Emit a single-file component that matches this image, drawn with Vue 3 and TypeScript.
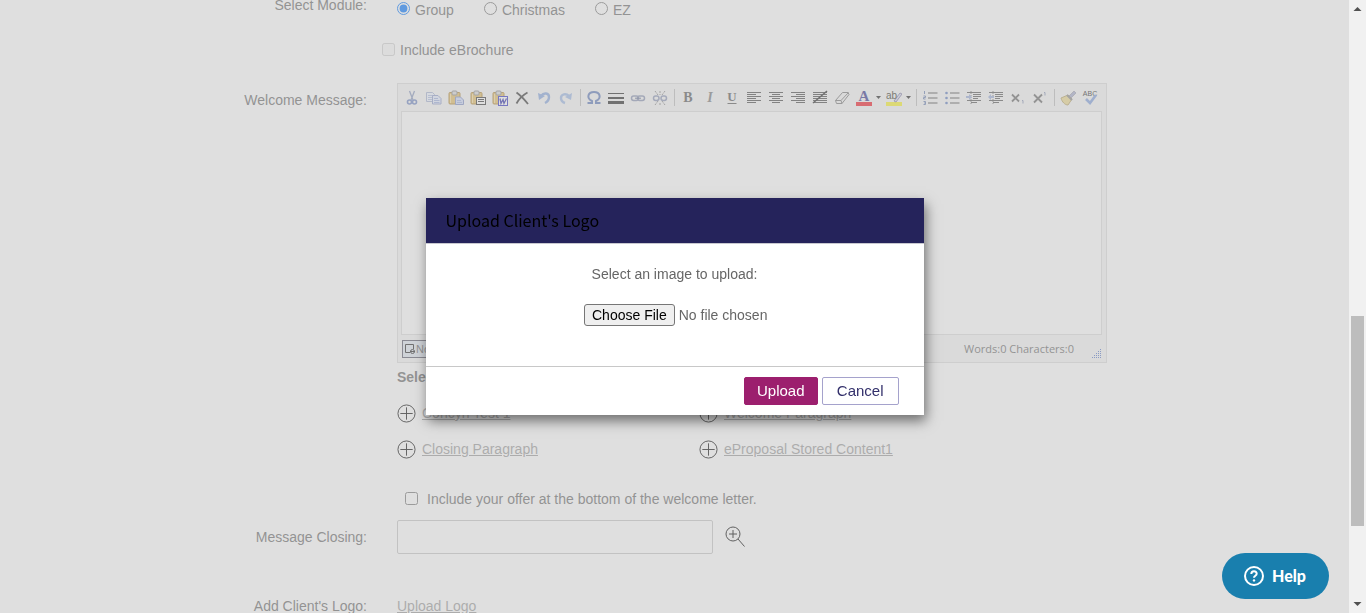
<script setup lang="ts">
import { ref } from 'vue'

interface Tool {
  name: string
  art: string
  menu?: boolean
}

const clipboard =
  '<rect x="1" y="2.500" width="11" height="11.500" rx="1" fill="#e3bd62" stroke="#ad8434"/><rect x="4" y="1" width="5" height="4" rx="1" fill="#d8d8d8" stroke="#888"/><path d="M2.500 4v9" stroke="#f6dea0"/>'

const groups: Tool[][] = [
  [
    {
      name: 'Cut',
      art: '<path d="M5.500 1L9 10M10.500 1L7 10" stroke="#8796bd" stroke-width="1.300"/><circle cx="5.500" cy="12" r="2" fill="none" stroke="#6d85c2" stroke-width="1.600"/><circle cx="10.500" cy="12" r="2" fill="none" stroke="#6d85c2" stroke-width="1.600"/>'
    },
    {
      name: 'Copy',
      art: '<path d="M.5 2.500h6l2 2v7h-8z" fill="#edf2ff" stroke="#a4b0d0"/><path d="M2 5.500h5M2 7.500h5M2 9.500h5" stroke="#aebce0"/><path d="M6.500 5.500h5.500l3 3v5.500H6.500z" fill="#e2eaff" stroke="#8f9dca"/><path d="M8 8.500h4M8 10.500h5.500M8 12.500h5.500" stroke="#9cafdf"/>'
    },
    {
      name: 'Paste',
      art: clipboard + '<path d="M7.500 7h5l3 3v4.500h-8z" fill="#cdd9f8" stroke="#7f8fc4"/><path d="M9 10.500h4M9 12.500h5" stroke="#9cafdf"/>'
    },
    {
      name: 'Paste Plain Text',
      art: clipboard + '<rect x="6.500" y="7.500" width="9" height="7" fill="#fff" stroke="#333"/><path d="M8 9.500h6M8 11.500h6" stroke="#333"/>'
    },
    {
      name: 'Paste From Word',
      art: clipboard + '<rect x="6.500" y="6.500" width="9" height="9" fill="#fff" stroke="#2f2fc2"/><path d="M8 8.500l1 5 2-4 1 4 2.500-5" fill="none" stroke="#2929a8" stroke-width="1.300"/>'
    },
    { name: 'Delete', art: '<path d="M2.500 2.500C6 5 10 9 14 14M13.500 2.500C9 5 5 9 2.500 13.500" fill="none" stroke="#333" stroke-width="1.800"/>' },
    {
      name: 'Undo',
      art: '<path d="M5 6c3-4 8-3 8 1 0 3-2 5-4 6" fill="none" stroke="#85a4dc" stroke-width="2.400"/><path d="M2 3l1 7 6-4z" fill="#85a4dc"/>'
    },
    {
      name: 'Redo',
      art: '<path d="M11 6C8 3 3 4 3 8c0 2 1 4 4 5" fill="none" stroke="#9bb6e4" stroke-width="2.400"/><path d="M14 3l-1 7-6-3z" fill="#9bb6e4"/>'
    }
  ],
  [
    {
      name: 'Insert Symbol',
      art: '<path d="M1.500 13h4.500v-2C0 8 2 2 8 2s8 6 2 9v2h4.500" fill="none" stroke="#5d78b8" stroke-width="2"/>'
    },
    { name: 'Horizontal Rule', art: '<path d="M0 3.500h16" stroke="#222" stroke-width="1"/><path d="M0 8h16" stroke="#222" stroke-width="2"/><path d="M0 12.500h16" stroke="#222" stroke-width="3"/>' },
    {
      name: 'Insert Link',
      art: '<rect x="1.500" y="6" width="7" height="4.500" rx="2.200" fill="none" stroke="#8791b0" stroke-width="1.500"/><rect x="7.500" y="6" width="7" height="4.500" rx="2.200" fill="none" stroke="#8791b0" stroke-width="1.500"/><path d="M5 8.200h6" stroke="#5e6b90"/>'
    },
    {
      name: 'Remove Link',
      art: '<rect x="1.500" y="6" width="5.500" height="4.500" rx="2.200" fill="none" stroke="#8a94b5" stroke-width="1.500"/><rect x="9" y="6" width="5.500" height="4.500" rx="2.200" fill="none" stroke="#8a94b5" stroke-width="1.500"/><path d="M3 1l3 4M8 1v4M13 1l-3 4M3 15l3-4M8 15v-3M13 15l-3-4" stroke="#888" stroke-dasharray="2 1"/>'
    }
  ],
  [
    { name: 'Bold', art: '<text x="8" y="12" text-anchor="middle" font-family="Liberation Serif, serif" font-weight="700" font-size="14" fill="#555">B</text>' },
    { name: 'Italic', art: '<text x="8" y="12" text-anchor="middle" font-family="Liberation Serif, serif" font-style="italic" font-weight="700" font-size="14" fill="#777">I</text>' },
    { name: 'Underline', art: '<text x="8" y="11" text-anchor="middle" font-family="Liberation Serif, serif" font-weight="700" font-size="13" fill="#555">U</text><path d="M3.500 13.500h9" stroke="#555"/>' },
    { name: 'Align Left', art: '<path d="M1 2.500h14M1 4.500h9M1 6.500h14M1 8.500h9M1 10.500h14M1 12.500h9" stroke="#444"/>' },
    { name: 'Align Center', art: '<path d="M1 2.500h14M4 4.500h8M1 6.500h14M4 8.500h8M1 10.500h14M4 12.500h8" stroke="#444"/>' },
    { name: 'Align Right', art: '<path d="M1 2.500h14M6 4.500h9M1 6.500h14M6 8.500h9M1 10.500h14M6 12.500h9" stroke="#444"/>' },
    { name: 'Remove Alignment', art: '<path d="M1 2.500h14M1 4.500h14M1 6.500h14M1 8.500h14M1 10.500h14M1 12.500h14" stroke="#444"/><path d="M1 13L15 1" stroke="#222" stroke-width="1.500"/>' },
    {
      name: 'Format Stripper',
      art: '<path d="M1.500 10.500L8.500 2.500h5.500l1 2-7 9H2.500z" fill="#f3f3f3" stroke="#777"/><path d="M1.500 10.500h5.500l7.500-8M7 10.500l1 3" fill="none" stroke="#777"/>'
    },
    {
      name: 'Foreground Color',
      menu: true,
      art: '<text x="8" y="11" text-anchor="middle" font-family="Liberation Serif, serif" font-weight="700" font-size="15" fill="#33338c">A</text><path d="M0 14h16" stroke="#f01824" stroke-width="4"/>'
    },
    {
      name: 'Background Color',
      menu: true,
      art: '<path d="M0 14h16" stroke="#f8f32b" stroke-width="4"/><path d="M8 11l6-8 2 1-6 8z" fill="#d7d9ee" stroke="#8581a9"/><text x="0" y="9" font-family="Liberation Sans, Arial, sans-serif" font-size="10" fill="#33331c">ab</text>'
    }
  ],
  [
    {
      name: 'Numbered List',
      art: '<path d="M6 3h9.500M6 8h9.500M6 13h9.500" stroke="#444"/><path d="M2.500 1v3M1.500 6h2v1.500h-2V9h2M1.500 11.500h2v3h-2M2 13h1.500" fill="none" stroke="#6a80b3"/>'
    },
    {
      name: 'Bullet List',
      art: '<path d="M6 3h9.500M6 8h9.500M6 13h9.500" stroke="#444"/><circle cx="2.500" cy="3" r="1.300" fill="#5f7dc0"/><circle cx="2.500" cy="8" r="1.300" fill="#5f7dc0"/><circle cx="2.500" cy="13" r="1.300" fill="#5f7dc0"/>'
    },
    {
      name: 'Indent',
      art: '<path d="M1 2.500h14M7 4.500h8M7 6.500h8M7 8.500h5M1 10.500h14M5 12.500h6" stroke="#555"/><path d="M5 1v14" stroke="#777" stroke-dasharray="1 1"/><path d="M0 6h3V4l3 3-3 3V8H0z" fill="#9aacd8"/>'
    },
    {
      name: 'Outdent',
      art: '<path d="M1 2.500h14M7 4.500h8M7 6.500h8M7 8.500h5M1 10.500h14M5 12.500h6" stroke="#555"/><path d="M5 1v14" stroke="#777" stroke-dasharray="1 1"/><path d="M6 6H3V4L0 7l3 3V8h3z" fill="#9aacd8"/>'
    },
    { name: 'Subscript', art: '<path d="M2 4.500l7 7M9 4.500l-7 7" stroke="#666" stroke-width="1.800"/><path d="M12 10.500h1v3" fill="none" stroke="#8793b5"/>' },
    { name: 'Superscript', art: '<path d="M2 4.500l8 8M10 4.500l-8 8" stroke="#666" stroke-width="1.800"/><path d="M12 2.500h1v3" fill="none" stroke="#8793b5"/>' }
  ],
  [
    {
      name: 'Format Painter',
      art: '<path d="M9 6l5-5 2 2-5 5z" fill="#a5aacd" stroke="#8e8e9f" stroke-width=".7"/><path d="M1 8l7-3 4 4-4 6c-3 0-6-3-7-7z" fill="#ecd98d" stroke="#b7a263"/><path d="M7 5l5 5" stroke="#888" stroke-width="2"/>'
    },
    {
      name: 'Spell Check',
      art: '<text x="8" y="6" text-anchor="middle" font-family="Liberation Sans, Arial, sans-serif" font-size="7" fill="#222">ABC</text><path d="M4 9l4 4 6-8" fill="none" stroke="#7f9fdc" stroke-width="2.600"/>'
    }
  ]
]

const modules = ['Group', 'Christmas', 'EZ']
const chosen = ref('Group')
const snippets = ['Concyn Test 1', 'Welcome Paragraph', 'Closing Paragraph', 'eProposal Stored Content1']
</script>

<template>
  <div class="screen">
    <main class="page">
      <form class="form" @submit.prevent>
        <div class="row modules">
          <span class="name">Select Module:</span>
          <div class="radios">
            <label v-for="m in modules" :key="m"><input v-model="chosen" type="radio" name="module" :value="m" />{{ m }}</label>
          </div>
        </div>

        <label class="brochure"><input type="checkbox" disabled />Include eBrochure</label>

        <div class="row">
          <label class="name welcome" for="welcome">Welcome Message:</label>
          <div>
            <div class="editor">
              <div class="toolbar">
                <div v-for="(g, i) in groups" :key="i" class="group">
                  <button v-for="t in g" :key="t.name" type="button" :class="{ menu: t.menu }" :aria-label="t.name">
                    <svg class="ico" viewBox="0 0 16 16" aria-hidden="true" v-html="t.art" />
                    <svg v-if="t.menu" class="drop" viewBox="0 0 5 3" aria-hidden="true"><path d="M0 0h5L2.500 3z" fill="#222" /></svg>
                  </button>
                </div>
              </div>
              <textarea id="welcome"></textarea>
              <div class="status">
                <button type="button" class="mode">
                  <svg viewBox="0 0 12 12" aria-hidden="true"><path d="M6 9.500H1.500v-8h8V6" fill="none" stroke="#222" /><circle cx="8.500" cy="8.500" r="2" fill="none" stroke="#222" /><path d="M6 8.500h5" stroke="#222" /></svg>Normal
                </button>
                <span class="count">Words:0 Characters:0</span>
                <svg class="grip" viewBox="0 0 10 10" aria-hidden="true"><path d="M8 1.500h2M6 3.500h4M4 5.500h6M2 7.500h8M0 9.500h10" stroke="#5577c8" stroke-dasharray="1 1" /></svg>
              </div>
            </div>
            <h2>Select Stored Content:</h2>
            <ul class="snippets">
              <li v-for="s in snippets" :key="s">
                <svg viewBox="0 0 20 20" aria-hidden="true"><circle cx="10" cy="10" r="9" /><path d="M10 3.500v13M3.500 10h13" /></svg>
                <a href="#">{{ s }}</a>
              </li>
            </ul>
            <label class="offer"><input type="checkbox" />Include your offer at the bottom of the welcome letter.</label>
          </div>
        </div>

        <div class="row closing">
          <label class="name" for="closing">Message Closing:</label>
          <div class="lookup">
            <input id="closing" type="text" />
            <button type="button" aria-label="Look up closing">
              <svg viewBox="0 0 20 22" aria-hidden="true"><circle cx="8" cy="8" r="7" /><path d="M8 4v8M4 8h8M13 13l6.500 7.500" /></svg>
            </button>
          </div>
        </div>

        <div class="row logo">
          <span class="name">Add Client's Logo:</span>
          <a href="#">Upload Logo</a>
        </div>
      </form>
    </main>

    <div class="scrollbar" aria-hidden="true">
      <svg viewBox="0 0 17 17"><path d="M8.500 7l4 4h-8z" fill="#505050" /></svg>
      <div class="before"></div>
      <div class="thumb"></div>
      <div class="after"></div>
      <svg viewBox="0 0 17 17"><path d="M8.500 10l4-4h-8z" fill="#505050" /></svg>
    </div>

    <div class="overlay">
      <section class="dialog" role="dialog" aria-labelledby="dialog-title">
        <header><h1 id="dialog-title">Upload Client's Logo</h1></header>
        <div class="body">
          <label for="file">Select an image to upload:</label>
          <input id="file" type="file" />
        </div>
        <footer>
          <button type="button" class="primary">Upload</button>
          <button type="button">Cancel</button>
        </footer>
      </section>
    </div>

    <button type="button" class="help">
      <svg viewBox="0 0 20 20" aria-hidden="true"><circle cx="10" cy="10" r="9" /><path d="M7.300 8c0-3.600 5.400-3.600 5.400-.3 0 2-2.700 2-2.700 4" /><circle class="dot" cx="10" cy="14.400" r="1.200" /></svg>Help
    </button>
  </div>
</template>

<style>
body {
  overflow: hidden;
}
</style>

<style scoped>
.screen {
  display: flex;
  height: 100vh;
  overflow: hidden;
  background: #fff;
  color: #666;
  font: 14px/20px "Liberation Sans", Arial, sans-serif;
}
button,
input,
textarea {
  box-sizing: border-box;
  margin: 0;
  font: inherit;
  color: inherit;
}
button {
  padding: 0;
  border: 0;
  background: none;
}
a {
  color: #999;
}
.page {
  flex: 1;
  min-width: 0;
  overflow: hidden;
}
.form {
  max-width: 865px;
  margin: 0 auto;
}
.row {
  display: grid;
  grid-template-columns: 125px minmax(0, 1fr);
  column-gap: 30px;
}
.name {
  text-align: right;
}
.modules .name {
  line-height: 10px;
}
.radios {
  display: flex;
  gap: 30px;
}
.radios label {
  display: flex;
  gap: 5px;
}
.radios input {
  width: 13px;
  height: 13px;
  margin-top: 2px;
}
.brochure {
  display: flex;
  align-items: center;
  gap: 5px;
  margin: 20px 0 23px 140px;
}
.brochure input,
.offer input {
  width: 13px;
  height: 13px;
  margin-bottom: 2px;
}
.welcome {
  padding-top: 7px;
}
.editor {
  display: flex;
  flex-direction: column;
  height: 280px;
  box-sizing: border-box;
  border: 1px solid #dcdcdc;
  background: #f4f4f4;
}
.toolbar {
  display: flex;
  padding-left: 3px;
  height: 27px;
  align-items: center;
}
.group {
  display: flex;
  align-items: center;
}
.group + .group::before {
  content: "";
  width: 1px;
  height: 17px;
  margin: 0 2px 0 3px;
  background: #bbb;
}
.group button {
  display: flex;
  align-items: center;
  width: 22px;
  padding: 0 3px;
}
.group button.menu {
  width: 30px;
  gap: 4px;
}
.ico {
  width: 16px;
  height: 16px;
  flex: none;
}
.drop {
  width: 5px;
  height: 3px;
  flex: none;
}
.editor textarea {
  flex: 1;
  min-height: 0;
  margin: 0 4px 0 3px;
  border: 1px solid #dcdcdc;
  background: #fff;
  resize: none;
}
.status {
  display: flex;
  align-items: center;
  height: 27px;
  padding: 0 4px;
  font: 11px/16px "Open Sans", sans-serif;
}
.mode {
  display: flex;
  align-items: center;
  height: 18px;
  padding: 0 1px;
  border: 1px solid #556;
  background: #dfe6f0;
  font-family: "Liberation Sans", Arial, sans-serif;
}
.mode svg {
  width: 12px;
  height: 12px;
}
.count {
  margin: 0 18px 0 auto;
}
.grip {
  width: 10px;
  height: 10px;
  align-self: flex-end;
  margin-bottom: 4px;
}
h2 {
  margin: 4px 0 8px;
  font-size: 14px;
  line-height: 20px;
}
.snippets {
  display: grid;
  grid-template-columns: 302px 1fr;
  gap: 16px 0;
  margin: 0;
  padding: 8px 0 0;
  list-style: none;
}
.snippets li {
  display: flex;
  align-items: center;
  gap: 6px;
}
.snippets svg {
  width: 19px;
  height: 19px;
  fill: none;
  stroke: #000;
}
.offer {
  display: flex;
  align-items: center;
  gap: 9px;
  margin: 30px 0 11px 8px;
}
.closing {
  align-items: center;
}
.lookup {
  display: flex;
  align-items: center;
  gap: 12px;
}
.lookup input {
  width: 316px;
  height: 34px;
  border: 1px solid #c4c4c4;
  border-radius: 2px;
  background: #fff;
}
.lookup svg {
  display: block;
  width: 20px;
  height: 22px;
  fill: none;
  stroke: #000;
}
.logo {
  margin-top: 42px;
}
.scrollbar {
  display: flex;
  flex-direction: column;
  width: 17px;
  background: #f1f1f1;
}
.scrollbar svg {
  width: 17px;
  height: 17px;
}
.before {
  flex: 299;
}
.thumb {
  flex: 210;
  margin: 0 2px;
  background: #bdbdbd;
}
.after {
  flex: 70;
}
.overlay {
  position: fixed;
  inset: 0 17px 0 0;
  display: flex;
  align-items: center;
  justify-content: center;
  background: rgba(192, 192, 192, 0.5);
}
.dialog {
  width: 498px;
  background: #fff;
  box-shadow: 2px 6px 12px rgba(0, 0, 0, 0.5);
}
.dialog header {
  padding: 10px 20px;
  background: #25235b;
  border-bottom: 1px solid #c8c8d0;
}
.dialog h1 {
  margin: 0;
  color: #000;
  font: 400 16px/25px "Noto Sans CJK SC", "Noto Sans", sans-serif;
}
.body {
  display: flex;
  flex-direction: column;
  align-items: center;
  gap: 20px;
  padding: 20px 20px 40px;
}
.body input {
  width: 187px;
  height: 22px;
  padding-left: 3px;
  line-height: 18px;
}
.body input::file-selector-button {
  box-sizing: border-box;
  height: 22px;
  margin: 0 4px 0 0;
  padding: 0 7px;
  border: 1px solid #767676;
  border-radius: 3px;
  background: #efefef;
  color: #000;
  font: inherit;
}
.dialog footer {
  display: flex;
  justify-content: flex-end;
  gap: 4px;
  padding: 10px 25px;
  border-top: 1px solid #c8c8c8;
}
.dialog footer button {
  min-width: 74px;
  height: 28px;
  padding: 0 14px;
  border: 1px solid #a5a2cc;
  border-radius: 2px;
  color: #33306b;
  font-size: 15px;
}
.dialog footer .primary {
  padding: 0 12px;
  border-color: #9c1f6e;
  background: #9c1f6e;
  color: #fff;
}
.help {
  position: fixed;
  right: 37px;
  bottom: 14px;
  display: flex;
  align-items: center;
  gap: 8px;
  height: 46px;
  padding: 0 23px 0 22px;
  border-radius: 23px;
  background: #197fae;
  color: #fff;
  font: 900 16px/20px Lato, sans-serif;
}
.help svg {
  width: 20px;
  height: 20px;
  fill: none;
  stroke: #fff;
  stroke-width: 2;
}
.help .dot {
  fill: #fff;
  stroke: none;
}
</style>
